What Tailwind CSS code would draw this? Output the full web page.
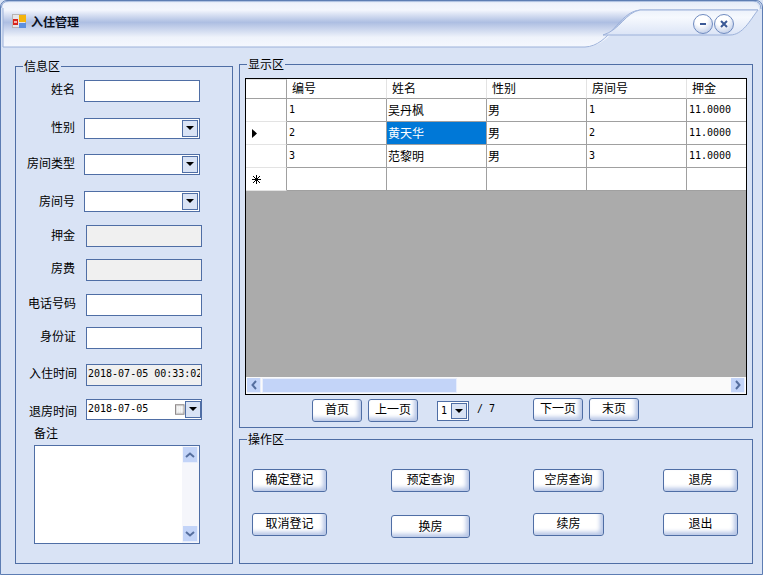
<!DOCTYPE html>
<html lang="zh-CN">
<head>
  <meta charset="UTF-8">
  <title>入住管理</title>
  <script src="https://cdn.jsdelivr.net/npm/@tailwindcss/browser@4"></script>
</head>
<body class="w-[763px] h-[575px] overflow-hidden bg-[#d9e3f5] text-[12px] leading-[14px] text-black font-['Noto_Sans_CJK_SC',sans-serif]">
<div class="relative w-[763px] h-[575px] overflow-hidden border border-[#5d7db3] rounded-t-[7px]">

  <!-- Title bar -->
  <header class="relative h-[46px] flex items-center pl-[11px]">
    <svg class="absolute -left-px -top-px" width="763" height="50" viewBox="0 0 763 50">
      <defs>
        <linearGradient id="band" x1="0" y1="0" x2="0" y2="1">
          <stop offset="0" stop-color="#eef2fb"/>
          <stop offset="0.16" stop-color="#f3f6fd"/>
          <stop offset="0.44" stop-color="#adbee2"/>
          <stop offset="0.78" stop-color="#eff3fb"/>
          <stop offset="1" stop-color="#f5f8fe"/>
        </linearGradient>
        <linearGradient id="tab" x1="0" y1="0" x2="0" y2="1">
          <stop offset="0" stop-color="#edf2fb"/>
          <stop offset="0.3" stop-color="#f6f9fe"/>
          <stop offset="1" stop-color="#dbe4f6"/>
        </linearGradient>
        <linearGradient id="top" x1="0" y1="0" x2="0" y2="1">
          <stop offset="0" stop-color="#e6ecf8"/>
          <stop offset="1" stop-color="#f2f5fc"/>
        </linearGradient>
      </defs>
      <path d="M3 8 Q4 2 10 2 H752 Q759 2 759 10 V10 H3 Z" fill="url(#top)"/>
      <path d="M3 3 H640 V10 C622 16 612 44 588 47 H3 Z" fill="url(#band)" stroke="none"/>
      <path d="M3 8 V47 H585 C610 46 618 12 640 10 H758" fill="none" stroke="#9db2da"/>
      <path d="M640 10 H758 C750 20 743 35 730 35 H603 C620 30 626 12 640 10 Z" fill="url(#tab)" stroke="#9db2da"/>
      <path d="M1 8 Q2 1 9 1 H753 Q761 1 761 9" fill="none" stroke="#8aa3d0"/>
    </svg>
    <svg class="relative mt-[-5px]" width="15" height="15" viewBox="0 0 15 15">
      <rect x="0.5" y="0.5" width="13" height="13" fill="#e6e6ea" stroke="#b8b4b4"/>
      <rect x="7" y="1" width="7" height="7" fill="#f4b40c"/>
      <rect x="7" y="9" width="7" height="5" fill="#5d8fe0"/>
      <rect x="1" y="5" width="5" height="6" fill="#d8251d"/>
      <rect x="2" y="7" width="3" height="2" fill="#f5b5b0"/>
    </svg>
    <h1 class="relative ml-[4px] mt-[-5px] font-bold text-[12px] text-[#0b1020]">入住管理</h1>
    <div class="relative ml-auto mr-[28px] mt-[-1px] flex gap-[1px]">
      <button class="w-[20px] h-[20px] rounded-full border border-[#6f8bc0] bg-[radial-gradient(circle_at_40%_25%,#fff_35%,#a9bbe0)] flex items-center justify-center">
        <svg width="8" height="8" viewBox="0 0 8 8"><rect x="1" y="3" width="6" height="2" fill="#3c5a96"/></svg>
      </button>
      <button class="w-[20px] h-[20px] rounded-full border border-[#6f8bc0] bg-[radial-gradient(circle_at_40%_25%,#fff_35%,#a9bbe0)] flex items-center justify-center">
        <svg width="10" height="10" viewBox="0 0 10 10"><path d="M2 2 L8 8 M8 2 L2 8" stroke="#3c5a96" stroke-width="2"/></svg>
      </button>
    </div>
  </header>

  <main class="relative flex pl-[14px] gap-[6px] mt-[10px]">

    <!-- 信息区 -->
    <fieldset class="w-[218px] h-[505px] mt-[2px] border border-[#4f6ea5] flex-none">
      <legend class="ml-[7px] px-[1px] leading-[14px]">信息区</legend>

      <div class="flex items-center h-[22px] mt-[7px]">
        <label class="w-[59px] mr-[9px] text-right mt-[-4px]">姓名</label>
        <input class="w-[116px] h-[22px] bg-white border border-[#4f6ea5]">
      </div>

      <div class="flex items-center h-[21px] mt-[16px]">
        <label class="w-[59px] mr-[9px] text-right mt-[-4px]">性别</label>
        <div class="w-[116px] h-[21px] bg-white border border-[#4f6ea5] flex justify-end items-center pr-[1px]">
          <span class="w-[16px] h-[17px] bg-[#d9e3f5] border border-[#4f6ea5] flex items-center justify-center">
            <svg width="8" height="5" viewBox="0 0 8 5"><path d="M0 0 H8 L4 4 Z" fill="#000"/></svg>
          </span>
        </div>
      </div>

      <div class="flex items-center h-[21px] mt-[15px]">
        <label class="w-[59px] mr-[9px] text-right mt-[-4px]">房间类型</label>
        <div class="w-[116px] h-[21px] bg-white border border-[#4f6ea5] flex justify-end items-center pr-[1px]">
          <span class="w-[16px] h-[17px] bg-[#d9e3f5] border border-[#4f6ea5] flex items-center justify-center">
            <svg width="8" height="5" viewBox="0 0 8 5"><path d="M0 0 H8 L4 4 Z" fill="#000"/></svg>
          </span>
        </div>
      </div>

      <div class="flex items-center h-[21px] mt-[16px]">
        <label class="w-[59px] mr-[9px] text-right mt-[-2px]">房间号</label>
        <div class="w-[116px] h-[21px] bg-white border border-[#4f6ea5] flex justify-end items-center pr-[1px]">
          <span class="w-[16px] h-[17px] bg-[#d9e3f5] border border-[#4f6ea5] flex items-center justify-center">
            <svg width="8" height="5" viewBox="0 0 8 5"><path d="M0 0 H8 L4 4 Z" fill="#000"/></svg>
          </span>
        </div>
      </div>

      <div class="flex items-center h-[22px] mt-[13px]">
        <label class="w-[59px] mr-[11px] text-right mt-[-2px]">押金</label>
        <input disabled class="w-[116px] h-[22px] bg-[#f0f0f0] border border-[#4f6ea5]">
      </div>

      <div class="flex items-center h-[22px] mt-[12px]">
        <label class="w-[59px] mr-[11px] text-right mt-[-4px]">房费</label>
        <input disabled class="w-[116px] h-[22px] bg-[#f0f0f0] border border-[#4f6ea5]">
      </div>

      <div class="flex items-center h-[22px] mt-[13px]">
        <label class="w-[60px] mr-[10px] text-right mt-[-5px]">电话号码</label>
        <input class="w-[116px] h-[22px] bg-white border border-[#4f6ea5]">
      </div>

      <div class="flex items-center h-[22px] mt-[11px]">
        <label class="w-[60px] mr-[10px] text-right mt-[-4px]">身份证</label>
        <input class="w-[116px] h-[22px] bg-white border border-[#4f6ea5]">
      </div>

      <div class="flex items-center h-[22px] mt-[15px]">
        <label class="w-[61px] mr-[9px] text-right mt-[-4px]">入住时间</label>
        <div class="w-[116px] h-[22px] bg-[#f0f0f0] border border-[#4f6ea5] pl-[1px]">
          <div class="w-[112px] overflow-hidden whitespace-nowrap font-['DejaVu_Sans_Mono',monospace] text-[10px] leading-[18px]">2018-07-05 00:33:02</div>
        </div>
      </div>

      <div class="flex h-[21px] mt-[13px]">
        <label class="w-[61px] mr-[9px] text-right mt-[5px]">退房时间</label>
        <div class="w-[116px] h-[21px] bg-white border border-[#4f6ea5] flex items-center">
          <span class="pl-[1px] mt-[-1px] whitespace-nowrap font-['DejaVu_Sans_Mono',monospace] text-[10px]">2018-07-05</span>
          <svg class="ml-[27px]" width="10" height="11" viewBox="0 0 10 11">
            <rect x="0.5" y="0.5" width="9" height="10" fill="#ddd" stroke="#8c8686"/>
            <path d="M2 3 H9 M2 5 H9 M2 7 H9 M3 2 V9 M5 2 V9 M7 2 V9" stroke="#fff" stroke-width="0.8"/>
          </svg>
          <span class="w-[17px] h-[17px] bg-[#d9e3f5] border border-[#4f6ea5] flex items-center justify-center">
            <svg width="8" height="5" viewBox="0 0 8 5"><path d="M0 0 H8 L4 4 Z" fill="#000"/></svg>
          </span>
        </div>
      </div>

      <label class="block ml-[18px] mt-[6px] h-[13px] leading-[13px]">备注</label>
      <div class="ml-[18px] mt-[6px] w-[166px] h-[99px] bg-white border border-[#4f6ea5] flex justify-end">
        <div class="w-[17px] bg-[#f5f6fb] flex flex-col justify-between py-[1px] pl-[1px]">
          <span class="w-[15px] h-[16px] bg-[#c3d4f8] border-b border-r border-[#e8eefc] flex items-center justify-center">
            <svg width="10" height="6" viewBox="0 0 10 6"><path d="M1 5 L5 1.5 L9 5" fill="none" stroke="#566f9f" stroke-width="2"/></svg>
          </span>
          <span class="w-[15px] h-[16px] bg-[#c3d4f8] border-b border-r border-[#e8eefc] flex items-center justify-center">
            <svg width="10" height="6" viewBox="0 0 10 6"><path d="M1 1 L5 4.5 L9 1" fill="none" stroke="#566f9f" stroke-width="2"/></svg>
          </span>
        </div>
      </div>
    </fieldset>

    <div class="flex-none w-[514px]">
      <!-- 显示区 -->
      <fieldset class="w-[514px] h-[371px] border border-[#4f6ea5]">
        <legend class="ml-[7px] px-[1px] leading-[14px]">显示区</legend>

        <div class="mt-[7px] ml-[5px] w-[502px] h-[317px] border border-black flex flex-col overflow-hidden bg-[#ababab]">
          <div class="grid grid-cols-[41px_100px_100px_100px_100px_100px] grid-rows-[20px_23px_23px_23px_23px] bg-white">
            <div class="border-r border-r-[#a0a0a0] border-b border-b-[#a0a0a0] border-t border-t-[#e3e3e3]"></div>
            <div class="border-r border-r-[#e3e3e3] border-b border-b-[#a0a0a0] pl-[5px] pt-[2px]">编号</div>
            <div class="border-r border-r-[#e3e3e3] border-b border-b-[#a0a0a0] pl-[5px] pt-[2px]">姓名</div>
            <div class="border-r border-r-[#e3e3e3] border-b border-b-[#a0a0a0] pl-[5px] pt-[2px]">性别</div>
            <div class="border-r border-r-[#e3e3e3] border-b border-b-[#a0a0a0] pl-[5px] pt-[2px]">房间号</div>
            <div class="border-r border-r-[#e3e3e3] border-b border-b-[#a0a0a0] pl-[5px] pt-[2px]">押金</div>

            <div class="border-r border-r-[#a0a0a0] border-b border-b-[#e3e3e3]"></div>
            <div class="border-r border-b border-[#a0a0a0] pl-[2px] pt-[4px] font-['DejaVu_Sans_Mono',monospace] text-[10px]">1</div>
            <div class="border-r border-b border-[#a0a0a0] pl-[1px] pt-[4px]">吴丹枫</div>
            <div class="border-r border-b border-[#a0a0a0] pl-[1px] pt-[4px]">男</div>
            <div class="border-r border-b border-[#a0a0a0] pl-[2px] pt-[4px] font-['DejaVu_Sans_Mono',monospace] text-[10px]">1</div>
            <div class="border-r border-b border-[#a0a0a0] pl-[2px] pt-[4px] font-['DejaVu_Sans_Mono',monospace] text-[10px]">11.0000</div>

            <div class="border-r border-r-[#a0a0a0] border-b border-b-[#e3e3e3] flex items-center pl-[6px]">
              <svg width="5" height="9" viewBox="0 0 5 9"><path d="M0 0 L5 4.5 L0 9 Z" fill="#000"/></svg>
            </div>
            <div class="border-r border-b border-[#a0a0a0] pl-[2px] pt-[4px] font-['DejaVu_Sans_Mono',monospace] text-[10px]">2</div>
            <div class="border-r border-b border-[#a0a0a0] bg-[#0078d7] text-white pl-[1px] pt-[4px]">黄天华</div>
            <div class="border-r border-b border-[#a0a0a0] pl-[1px] pt-[4px]">男</div>
            <div class="border-r border-b border-[#a0a0a0] pl-[2px] pt-[4px] font-['DejaVu_Sans_Mono',monospace] text-[10px]">2</div>
            <div class="border-r border-b border-[#a0a0a0] pl-[2px] pt-[4px] font-['DejaVu_Sans_Mono',monospace] text-[10px]">11.0000</div>

            <div class="border-r border-r-[#a0a0a0] border-b border-b-[#e3e3e3]"></div>
            <div class="border-r border-b border-[#a0a0a0] pl-[2px] pt-[4px] font-['DejaVu_Sans_Mono',monospace] text-[10px]">3</div>
            <div class="border-r border-b border-[#a0a0a0] pl-[1px] pt-[4px]">范黎明</div>
            <div class="border-r border-b border-[#a0a0a0] pl-[1px] pt-[4px]">男</div>
            <div class="border-r border-b border-[#a0a0a0] pl-[2px] pt-[4px] font-['DejaVu_Sans_Mono',monospace] text-[10px]">3</div>
            <div class="border-r border-b border-[#a0a0a0] pl-[2px] pt-[4px] font-['DejaVu_Sans_Mono',monospace] text-[10px]">11.0000</div>

            <div class="border-r border-r-[#a0a0a0] border-b border-b-[#e3e3e3] flex items-center pl-[6px]">
              <svg width="9" height="9" viewBox="0 0 9 9"><path d="M4.5 0 V9 M0 4.5 H9 M1 1 L8 8 M8 1 L1 8" stroke="#000"/></svg>
            </div>
            <div class="border-r border-b border-[#a0a0a0]"></div>
            <div class="border-r border-b border-[#a0a0a0]"></div>
            <div class="border-r border-b border-[#a0a0a0]"></div>
            <div class="border-r border-b border-[#a0a0a0]"></div>
            <div class="border-r border-b border-[#a0a0a0]"></div>
          </div>

          <div class="mt-auto h-[17px] bg-[#fafafa] flex items-center">
            <span class="ml-[1px] w-[14px] h-[15px] bg-[#c3d4f8] border-r border-b border-[#e8eefc] flex items-center justify-center">
              <svg width="6" height="10" viewBox="0 0 6 10"><path d="M5 1 L1.5 5 L5 9" fill="none" stroke="#566f9f" stroke-width="2"/></svg>
            </span>
            <span class="ml-[1px] w-[195px] h-[15px] bg-[#c3d4f8] border border-[#e8eefc]"></span>
            <span class="ml-auto mr-[1px] w-[14px] h-[15px] bg-[#c3d4f8] border-r border-b border-[#e8eefc] flex items-center justify-center">
              <svg width="6" height="10" viewBox="0 0 6 10"><path d="M1 1 L4.5 5 L1 9" fill="none" stroke="#566f9f" stroke-width="2"/></svg>
            </span>
          </div>
        </div>

        <!-- pager -->
        <div class="flex items-start pl-[72px]">
          <button class="w-[50px] h-[23px] mt-[4px] pb-[3px] rounded-[3px] border border-[#4f6ea5] bg-white shadow-[inset_-3px_-3px_4px_#b7c6e6]">首页</button>
          <button class="w-[50px] h-[23px] mt-[4px] ml-[6px] pb-[3px] rounded-[3px] border border-[#4f6ea5] bg-white shadow-[inset_-3px_-3px_4px_#b7c6e6]">上一页</button>
          <div class="w-[32px] h-[20px] mt-[6px] ml-[19px] bg-white border border-[#4f6ea5] flex items-center justify-between pl-[3px] pr-[1px] font-['DejaVu_Sans_Mono',monospace] text-[10px]">1
            <span class="w-[16px] h-[16px] bg-[#d9e3f5] border border-[#4f6ea5] flex items-center justify-center">
              <svg width="8" height="5" viewBox="0 0 8 5"><path d="M0 0 H8 L4 4 Z" fill="#000"/></svg>
            </span>
          </div>
          <span class="mt-[7px] ml-[8px] w-[56px] font-['DejaVu_Sans_Mono',monospace] text-[10px]">/ 7</span>
          <button class="w-[50px] h-[23px] mt-[3px] pb-[3px] rounded-[3px] border border-[#4f6ea5] bg-white shadow-[inset_-3px_-3px_4px_#b7c6e6]">下一页</button>
          <button class="w-[50px] h-[23px] mt-[3px] ml-[6px] pb-[3px] rounded-[3px] border border-[#4f6ea5] bg-white shadow-[inset_-3px_-3px_4px_#b7c6e6]">末页</button>
        </div>
      </fieldset>

      <!-- 操作区 -->
      <fieldset class="w-[514px] h-[132px] mt-[4px] border border-[#4f6ea5]">
        <legend class="ml-[7px] px-[1px] leading-[14px]">操作区</legend>
        <div class="flex items-start pt-[23px] pl-[12px]">
          <div class="flex flex-col w-[75px]">
            <button class="h-[23px] pb-[3px] rounded-[3px] border border-[#4f6ea5] bg-white shadow-[inset_-3px_-3px_4px_#b7c6e6]">确定登记</button>
            <button class="h-[23px] pb-[3px] mt-[21px] rounded-[3px] border border-[#4f6ea5] bg-white shadow-[inset_-3px_-3px_4px_#b7c6e6]">取消登记</button>
          </div>
          <div class="flex flex-col w-[79px] ml-[64px]">
            <button class="h-[23px] pb-[3px] rounded-[3px] border border-[#4f6ea5] bg-white shadow-[inset_-3px_-3px_4px_#b7c6e6]">预定查询</button>
            <button class="h-[23px] pb-[2px] mt-[23px] rounded-[3px] border border-[#4f6ea5] bg-white shadow-[inset_-3px_-3px_4px_#b7c6e6]">换房</button>
          </div>
          <div class="flex flex-col w-[71px] ml-[63px]">
            <button class="h-[23px] pb-[3px] rounded-[3px] border border-[#4f6ea5] bg-white shadow-[inset_-3px_-3px_4px_#b7c6e6]">空房查询</button>
            <button class="h-[23px] pb-[3px] mt-[21px] rounded-[3px] border border-[#4f6ea5] bg-white shadow-[inset_-3px_-3px_4px_#b7c6e6]">续房</button>
          </div>
          <div class="flex flex-col w-[75px] ml-[59px]">
            <button class="h-[23px] pb-[3px] rounded-[3px] border border-[#4f6ea5] bg-white shadow-[inset_-3px_-3px_4px_#b7c6e6]">退房</button>
            <button class="h-[23px] pb-[3px] mt-[21px] rounded-[3px] border border-[#4f6ea5] bg-white shadow-[inset_-3px_-3px_4px_#b7c6e6]">退出</button>
          </div>
        </div>
      </fieldset>
    </div>
  </main>
</div>
</body>
</html>
